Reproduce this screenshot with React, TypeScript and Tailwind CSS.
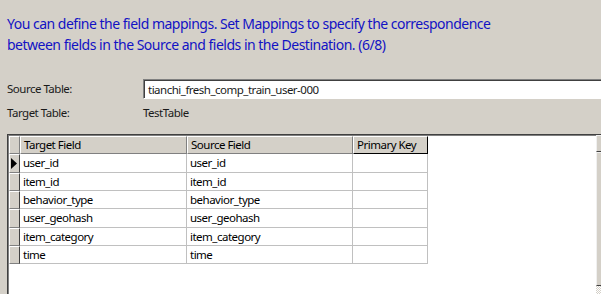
const rows = [
  ["user_id", "user_id", 19],
  ["item_id", "item_id", 18],
  ["behavior_type", "behavior_type", 18],
  ["user_geohash", "user_geohash", 19],
  ["item_category", "item_category", 18],
  ["time", "time", 18],
] as const;

const RowHeader = ({ active }: { active?: boolean }) => (
  <div className="w-[11px] h-full shrink-0 bg-[#d4d0c8] border-t border-l border-t-white border-l-white border-b border-r border-b-[#808080] border-r-[#404040] flex items-center">
    {active && (
      <svg width="7" height="11" viewBox="0 0 7 11" className="ml-[1px]">
        <path d="M0 0 L6 5.5 L0 11 Z" fill="#000" />
      </svg>
    )}
  </div>
);

export default function App() {
  return (
    <div
      className="w-[601px] h-[294px] overflow-hidden bg-[#d4d0c8] text-[#1a1a1a]"
      style={{ fontFamily: "'Noto Sans', 'Open Sans', sans-serif" }}
    >
      <div className="pt-[13px] px-[7px] text-[14px] leading-[21px] tracking-[-0.5px] text-[#1212c4]">
        You can define the field mappings. Set Mappings to specify the correspondence
        <br />
        between fields in the Source and fields in the Destination. (6/8)
      </div>

      <div className="mt-[24px] flex items-center h-[20px] text-[11.5px] tracking-[-0.5px]">
        <div className="w-[143px] pl-[7px] shrink-0">Source Table:</div>
        <div className="flex h-[20px] w-[480px] shrink-0 bg-white border-t border-l border-t-[#808080] border-l-[#808080] border-b border-r border-b-white border-r-white">
          <div className="flex-1 flex items-center pl-[3px] border-t border-l border-t-[#404040] border-l-[#404040] whitespace-nowrap">
            tianchi_fresh_comp_train_user-000
          </div>
          <div className="w-[17px] h-[18px] shrink-0 bg-[#d4d0c8] border-t border-l border-t-[#f0f0f0] border-l-[#f0f0f0] border-b border-r border-b-[#404040] border-r-[#404040] flex items-center justify-center">
            <svg width="7" height="4" viewBox="0 0 7 4">
              <path d="M0 0 H7 L3.5 4 Z" fill="#000" />
            </svg>
          </div>
        </div>
      </div>

      <div className="mt-[5px] flex items-center h-[18px] text-[11.5px] tracking-[-0.5px]">
        <div className="w-[143px] pl-[7px] shrink-0">Target Table:</div>
        <div>TestTable</div>
      </div>

      <div className="mt-[12px] ml-[7px] w-[620px] h-[200px] flex bg-white border-t border-l border-t-[#404040] border-l-[#404040] text-[11.5px] tracking-[-0.5px] text-black">
        <div className="w-[588px] shrink-0 border-t border-l border-t-[#808080] border-l-[#808080]">
          <div className="flex h-[18px] bg-[#d4d0c8]">
            <div className="w-[11px] shrink-0 border-t border-l border-t-white border-l-white border-b border-r border-b-[#808080] border-r-[#808080]" />
            <div className="w-[167px] shrink-0 pl-[3px] leading-[16px] border-t border-l border-t-white border-l-white border-b border-r border-b-[#808080] border-r-[#808080]">
              Target Field
            </div>
            <div className="w-[166px] shrink-0 pl-[3px] leading-[16px] border-t border-l border-t-white border-l-white border-b border-r border-b-[#808080] border-r-[#808080]">
              Source Field
            </div>
            <div className="w-[75px] shrink-0 pl-[3px] leading-[16px] border-t border-l border-t-white border-l-white border-b border-r border-b-black border-r-black">
              Primary Key
            </div>
            <div className="flex-1 bg-white" />
          </div>
          {rows.map(([t, s, h], i) => (
            <div key={t} className={h === 19 ? "flex h-[19px]" : "flex h-[18px]"}>
              <RowHeader active={i === 0} />
              <div className="w-[167px] shrink-0 pl-[3px] flex items-center border-b border-r border-[#c0c0c0]">{t}</div>
              <div className="w-[166px] shrink-0 pl-[3px] flex items-center border-b border-r border-[#c0c0c0]">{s}</div>
              <div className="w-[75px] shrink-0 border-b border-r border-[#c0c0c0]" />
            </div>
          ))}
        </div>
        <div className="w-[17px] shrink-0 flex flex-col bg-[#d4d0c8]">
          <div className="h-[17px] border-t border-l border-t-[#f0f0f0] border-l-[#f0f0f0] border-b border-r border-b-[#404040] border-r-[#404040]" />
          <div className="h-[134px] border-t border-l border-t-[#f0f0f0] border-l-[#f0f0f0] border-b border-r border-b-[#404040] border-r-[#404040]" />
          <div className="flex-1 bg-[repeating-conic-gradient(#ffffff_0_25%,#d4d0c8_0_50%)] bg-[length:2px_2px]" />
        </div>
      </div>
    </div>
  );
}
